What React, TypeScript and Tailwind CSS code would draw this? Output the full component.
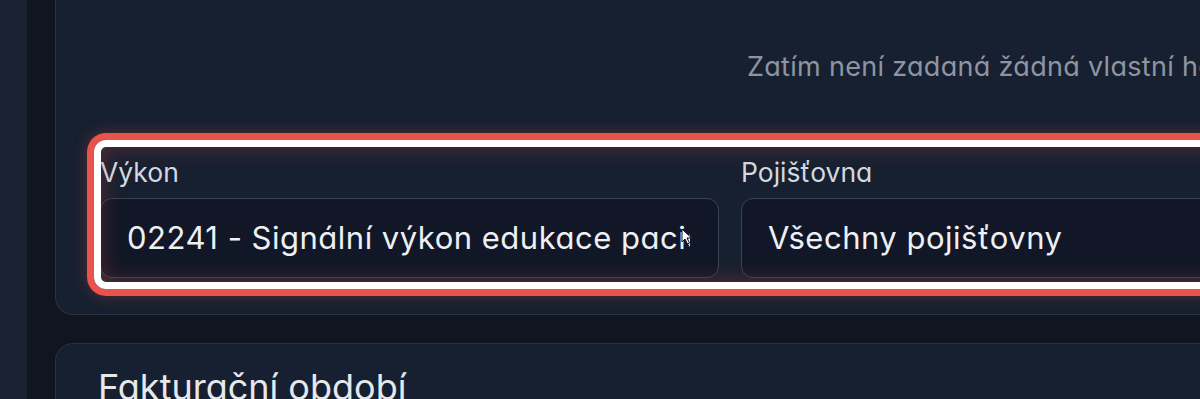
import React from 'react'

function Field({ label, value, cursor }: { label: string; value: string; cursor?: boolean }) {
  return (
    <div className="flex flex-col gap-[10px] min-w-0">
      <label className="text-[26.5px] leading-[32px] text-[#d4d8df]">{label}</label>
      <div className="relative h-[80px] flex items-center rounded-[12px] border-[1.5px] border-[#394253] bg-[#111726] pl-[26px] pr-[28px] overflow-hidden">
        <span className="min-w-0 text-[31px] tracking-[0.5px] text-[#eef0f4] whitespace-nowrap overflow-hidden">{value}</span>
        {cursor && (
          <svg className="absolute left-[580px] top-[29px]" width="12" height="17" viewBox="0 0 12 17">
            <path d="M1 1 L1 14 L4 11 L6.5 16 L8.5 15 L6 10 L10.5 10 Z" fill="#fff" stroke="#111" strokeWidth="1" strokeLinejoin="round" />
          </svg>
        )}
      </div>
    </div>
  )
}

export default function App() {
  return (
    <div
      className="flex h-[399px] w-[1200px] overflow-hidden bg-[#10151f] [font-feature-settings:'cv11']"
      style={{ fontFamily: 'Inter, "Noto Sans", sans-serif' }}
    >
      {/* sidebar strip */}
      <div className="w-[27px] shrink-0 bg-[#1a2231]" />

      <main className="flex flex-col gap-[28px] pl-[28px]">
        {/* top card */}
        <section className="w-[1400px] h-[315px] shrink-0 rounded-b-[18px] border border-t-0 border-[#2a3343] bg-[#172030] px-[44px] pt-[51px]">
          <p className="pl-[647px] text-[27px] tracking-[0.3px] leading-[32px] text-[#8e95a2] whitespace-nowrap">
            Zatím není zadaná žádná vlastní hodnota.
          </p>

          <div className="relative mt-[73px] grid grid-cols-2 gap-[22px] w-[1260px]">
            <Field label="Výkon" value="02241 - Signální výkon edukace pacienta" cursor />
            <Field label="Pojišťovna" value="Všechny pojišťovny" />

            {/* annotation highlight */}
            <div className="pointer-events-none absolute -left-[6px] -top-[16px] -bottom-[11px] -right-[6px] rounded-[12px] border-[7px] border-white shadow-[0_0_0_7px_#e8534a,0_0_14px_8px_rgba(232,83,74,0.25),inset_0_0_22px_rgba(232,83,74,0.3)]" />
          </div>
        </section>

        {/* second card */}
        <section className="w-[1400px] h-[200px] shrink-0 rounded-t-[18px] border border-[#2a3343] bg-[#172030] px-[42px] pt-[21px]">
          <h2 className="text-[36px] leading-[44px] text-[#e6e8ec]">Fakturační období</h2>
        </section>
      </main>
    </div>
  )
}
